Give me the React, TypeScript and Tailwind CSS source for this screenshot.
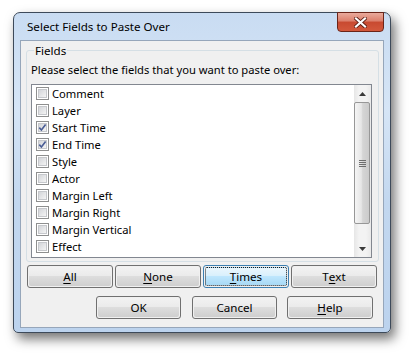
import type { ReactNode } from "react";

const FIELDS: { label: string; checked: boolean }[] = [
  { label: "Comment", checked: false },
  { label: "Layer", checked: false },
  { label: "Start Time", checked: true },
  { label: "End Time", checked: true },
  { label: "Style", checked: false },
  { label: "Actor", checked: false },
  { label: "Margin Left", checked: false },
  { label: "Margin Right", checked: false },
  { label: "Margin Vertical", checked: false },
  { label: "Effect", checked: false },
];

function CheckBox({ checked }: { checked: boolean }) {
  return (
    <span className="flex h-[13px] w-[13px] shrink-0 items-center justify-center border border-[#8e8f8f] bg-white p-[1px]">
      <span className="relative h-full w-full border border-[#c6c8cc] bg-[linear-gradient(135deg,#d3d5d9,#f4f4f4)]">
        {checked ? (
          <svg viewBox="0 0 9 9" className="absolute -left-[1px] -top-[1px] h-[9px] w-[9px]">
            <path d="M1.3 4.6 L3.4 7 L7.6 1.4" fill="none" stroke="#4a5d95" strokeWidth="1.6" />
          </svg>
        ) : null}
      </span>
    </span>
  );
}

// one letter underlined, like a mnemonic
function Label({ text, at }: { text: string; at: number }) {
  return (
    <>
      {text.slice(0, at)}
      <span className="underline decoration-1 underline-offset-[2px]">{text[at]}</span>
      {text.slice(at + 1)}
    </>
  );
}

function Button({
  children,
  width,
  focused = false,
  className = "",
}: {
  children: ReactNode;
  width: string;
  focused?: boolean;
  className?: string;
}) {
  return (
    <button
      type="button"
      className={`${width} ${className} h-[23px] shrink-0 rounded-[3px] border p-[1px] text-[11.6px] leading-none text-black ${
        focused ? "border-[#3c7fb1]" : "border-[#707070]"
      }`}
    >
      <span
        className={`flex h-full w-full items-center justify-center rounded-[2px] ${
          focused
            ? "border border-dotted border-[#1b1b1b] bg-[linear-gradient(to_bottom,#eaf6fd,#d9f0fc_45%,#bee6fd_50%,#a7d9f5)]"
            : "bg-[linear-gradient(to_bottom,#f2f2f2,#ebebeb_45%,#dddddd_50%,#cfcfcf)]"
        }`}
      >
        {children}
      </span>
    </button>
  );
}

function ScrollBar() {
  return (
    <div className="flex w-[17px] shrink-0 flex-col bg-[linear-gradient(to_right,#e6e6e6,#f3f3f3_30%,#f3f3f3_70%,#e9e9e9)]">
      <div className="flex h-[17px] items-center justify-center">
        <svg viewBox="0 0 7 4" className="h-[4px] w-[7px]">
          <path d="M0 4 L3.5 0 L7 4 Z" fill="#3a3a3a" />
        </svg>
      </div>
      <div className="mr-[1px] flex h-[122px] items-center justify-center rounded-[2px] border border-[#979797] bg-[linear-gradient(to_right,#f5f5f5,#e6e6e6_45%,#d5d5d5_55%,#cbcbcb)]">
        <div className="flex flex-col gap-[1px]">
          <span className="block h-[1px] w-[7px] bg-[#6e6e6e]" />
          <span className="block h-[1px] w-[7px] bg-[#6e6e6e]" />
          <span className="block h-[1px] w-[7px] bg-[#6e6e6e]" />
          <span className="block h-[1px] w-[7px] bg-[#6e6e6e]" />
        </div>
      </div>
      <div className="flex-1" />
      <div className="flex h-[17px] items-center justify-center">
        <svg viewBox="0 0 7 4" className="h-[4px] w-[7px]">
          <path d="M0 0 L3.5 4 L7 0 Z" fill="#3a3a3a" />
        </svg>
      </div>
    </div>
  );
}

export default function App() {
  return (
    <div className="h-[353px] w-[409px] overflow-hidden bg-white pl-[13px] pt-[12px] font-['Noto_Sans',sans-serif] text-[11.2px] text-black">
      <div className="relative flex h-[321px] w-[378px] flex-col rounded-t-[7px] rounded-b-[5px] border border-[#3d4a5a] bg-[linear-gradient(to_bottom,#c9dcf2,#d6e5f6_30%,#c2d7ef_60%,#bcd3ee)] px-[6px] pb-[4px] shadow-[4px_6px_12px_rgba(0,0,0,0.55)]">
        {/* title bar */}
        <div className="flex h-[27px] shrink-0 items-center pl-[7px]">
          <span className="text-[11.6px] leading-[15px]">Select Fields to Paste Over</span>
        </div>
        <div className="absolute left-[323px] top-[-1px] flex h-[20px] w-[47px] items-center justify-center rounded-b-[4px] border border-[#6b2418] bg-[linear-gradient(to_bottom,#e9aa9c,#dc7f6b_45%,#c84a30_50%,#d3583c)]">
          <svg viewBox="0 0 13 11" className="h-[11px] w-[13px]">
            <path d="M2 1.5 L11 9.5 M11 1.5 L2 9.5" stroke="#5a1c12" strokeWidth="3.8" strokeLinecap="square" />
            <path d="M2 1.5 L11 9.5 M11 1.5 L2 9.5" stroke="#ffffff" strokeWidth="2.2" strokeLinecap="square" />
          </svg>
        </div>

        {/* client area */}
        <div className="flex flex-1 flex-col border border-[#96a6ba] bg-[#f0f0f0] pl-[5px]">
          <div className="relative mt-[9px] w-[353px] rounded-[3px] border border-[#d5dfe5] pl-[4px] pb-[3px]">
            <span className="absolute -top-[8px] left-[7px] bg-[#f0f0f0] px-[1px] text-[11.6px] leading-[15px]">
              Fields
            </span>
            <div className="pt-[11px] leading-[15px]">Please select the fields that you want to paste over:</div>
            <div className="mt-[7px] flex h-[174px] w-[341px] border border-[#828790] bg-white">
              <div className="flex flex-1 flex-col">
                {FIELDS.map((f) => (
                  <div key={f.label} className="flex h-[17px] items-center pl-[4px]">
                    <CheckBox checked={f.checked} />
                    <span className="ml-[3px] leading-[15px]">{f.label}</span>
                  </div>
                ))}
              </div>
              <ScrollBar />
            </div>
          </div>

          <div className="ml-[1px] mt-[3px] flex gap-[2px]">
            <Button width="w-[86px]">
              <Label text="All" at={0} />
            </Button>
            <Button width="w-[86px]">
              <Label text="None" at={0} />
            </Button>
            <Button width="w-[86px]" focused>
              <Label text="Times" at={0} />
            </Button>
            <Button width="w-[86px]">
              <Label text="Text" at={1} />
            </Button>
          </div>

          <div className="mt-[8px] flex">
            <Button width="w-[85px]" className="ml-[70px]">
              OK
            </Button>
            <Button width="w-[85px]" className="ml-[11px]">
              Cancel
            </Button>
            <Button width="w-[86px]" className="ml-[10px]">
              <Label text="Help" at={0} />
            </Button>
          </div>
        </div>
      </div>
    </div>
  );
}
